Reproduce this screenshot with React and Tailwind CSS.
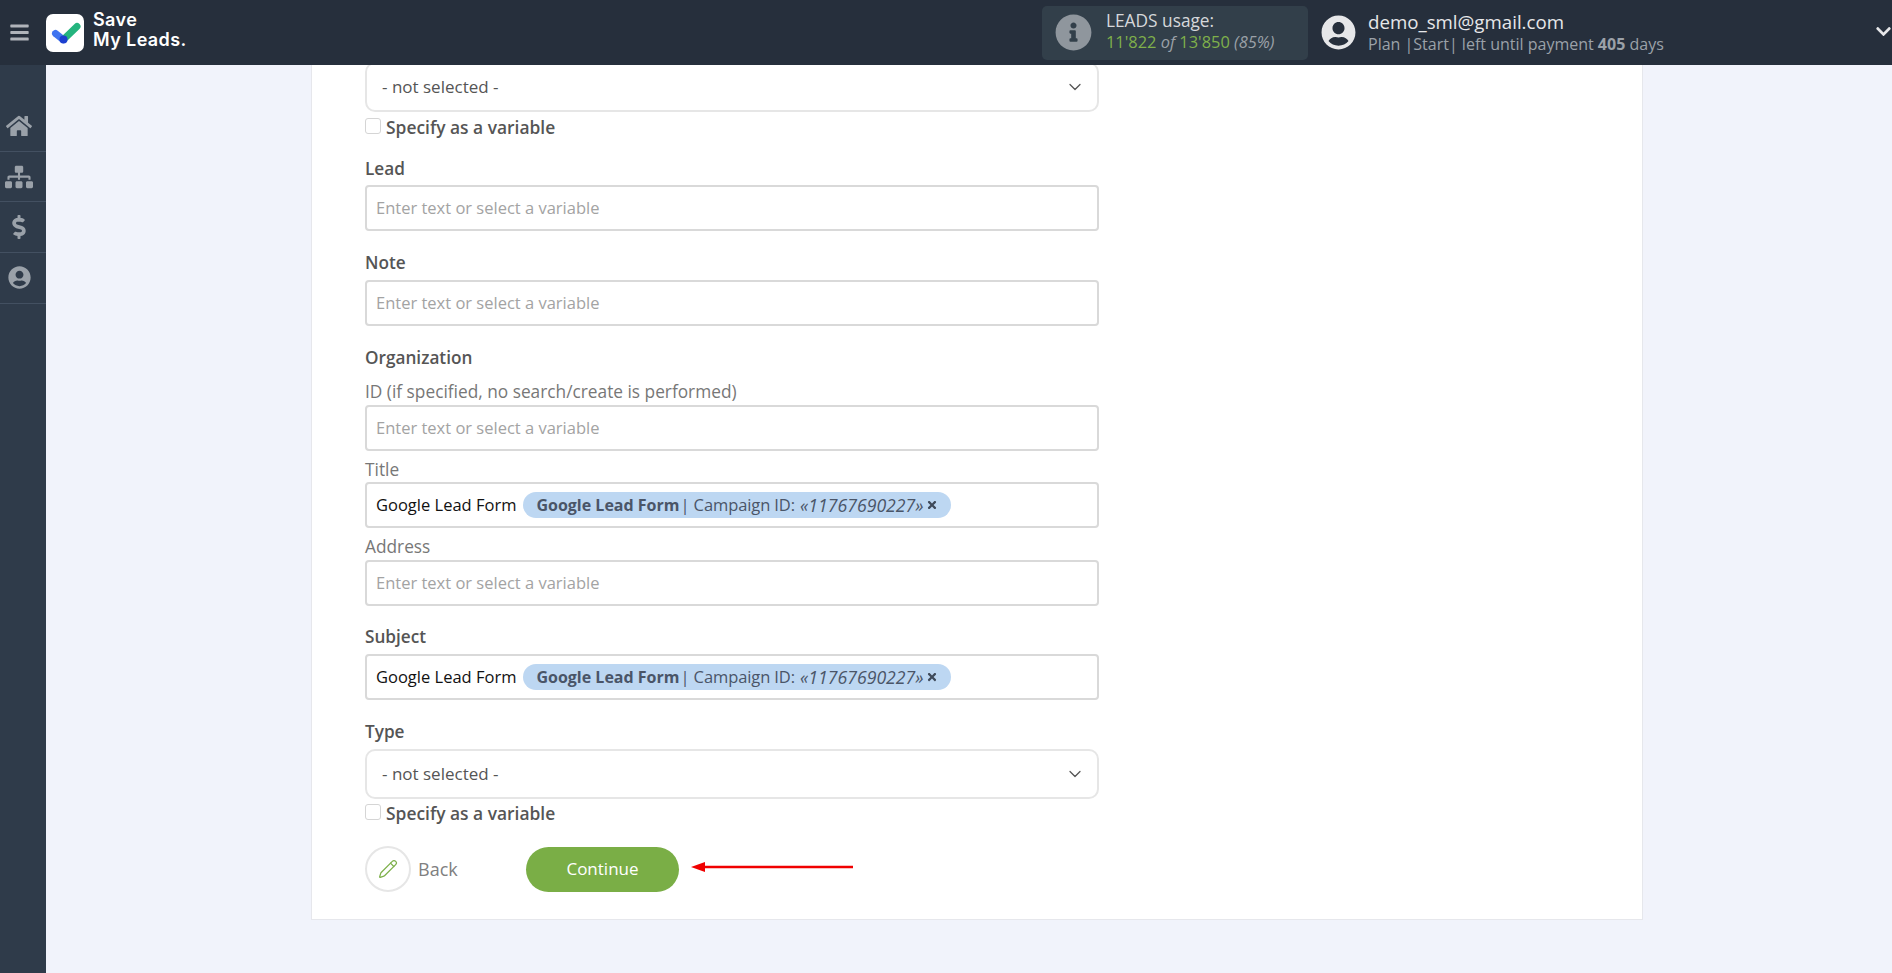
import { ChevronDown, Pencil } from 'lucide-react';
import { FaBars, FaChevronDown, FaDollarSign, FaHome, FaInfoCircle, FaSitemap, FaTimes, FaUserCircle } from 'react-icons/fa';

const openSans = "font-['Open_Sans',sans-serif]";

function SelectBox({ className = '' }) {
  return (
    <div className={`flex h-[50px] w-[734px] items-center justify-between rounded-[10px] border-2 border-[#e6e6e6] bg-white pl-[15px] pr-[12px] text-[17px] text-[#555] ${className}`}>
      <span>- not selected -</span>
      <ChevronDown size={20} strokeWidth={1.5} className="text-[#555]" />
    </div>
  );
}

function SpecifyVariable({ className = '' }) {
  return (
    <div className={`flex h-6 items-center gap-[3px] ${className}`}>
      <span className="-mt-[2px] h-[16px] w-[16px] rounded-[3px] border border-[#d5d5d5] bg-white" />
      <span className="ml-[2px] text-[17.4px] font-semibold text-[#555]">Specify as a variable</span>
    </div>
  );
}

function FieldLabel({ className = '', children }) {
  return <div className={`h-6 text-[17.2px] font-semibold leading-6 text-[#555] ${className}`}>{children}</div>;
}

function SubLabel({ className = '', children }) {
  return <div className={`h-6 text-[17.3px] leading-6 text-[#777] ${className}`}>{children}</div>;
}

function TextInput({ className = '', children }) {
  return (
    <div className={`flex h-[46px] w-[734px] items-center whitespace-nowrap rounded-[4px] border-2 border-[#d9d9d9] bg-white px-[9px] text-[16.5px] ${className}`}>
      {children || <span className="text-[#a3a3a3]">Enter text or select a variable</span>}
    </div>
  );
}

function TagInput({ className = '' }) {
  return (
    <TextInput className={className}>
      <span className="text-[#111]">Google Lead Form</span>
      <span className="ml-[7px] flex h-[26px] w-[428px] items-center rounded-full bg-[#bdd7f2] pl-[13px] text-[#4a5568]">
        <span className="text-[16px] font-bold">Google Lead Form</span>
        <span className="ml-[1px] tracking-[-0.1px]">| Campaign ID:</span>
        <span className="ml-[5px] text-[17.7px] italic">«11767690227»</span>
        <FaTimes size={12} className="ml-[2px] text-[#3f4a5a]" />
      </span>
    </TextInput>
  );
}

function RedArrow() {
  return (
    <svg width="162" height="12" viewBox="0 0 162 12" className="ml-[12px] -mt-[5px]">
      <path d="M12 4.8H162V7.2H12z" fill="#f00000" />
      <path d="M0 6L14 1V11z" fill="#f00000" />
    </svg>
  );
}

function Logo() {
  return (
    <div className="h-[38px] w-[38px] rounded-[7px] bg-white">
      <svg width="38" height="38" viewBox="0 0 38 38" fill="none">
        <path d="M9.5 19.5L17 25.5" stroke="#3f74f0" strokeWidth="7" strokeLinecap="round" />
        <path d="M18 25L31 12.5" stroke="#24b47e" strokeWidth="7" strokeLinecap="round" />
        <circle cx="17.5" cy="25.5" r="4" fill="#1c3fd0" />
      </svg>
    </div>
  );
}

function SideItem({ children }) {
  return (
    <div className="flex h-[50.7px] items-center justify-center border-b border-[#435061] pr-[8px] text-[#9aa1a9]">
      {children}
    </div>
  );
}

export default function App() {
  return (
    <div className={`flex h-[973px] flex-col overflow-hidden bg-[#f1f3fb] ${openSans}`}>
      <header className="relative z-10 flex h-[65px] shrink-0 items-center bg-[#262f3c] text-white">
        <div className="flex w-[46px] justify-center pr-[8px] text-[#b0b4ba]">
          <FaBars size={21} />
        </div>
        <Logo />
        <div className="-mt-[6px] ml-[9px] font-['Inter',sans-serif] text-[18px] font-semibold leading-[20px] tracking-[0.4px]">
          <div>Save</div>
          <div>My Leads.</div>
        </div>
        <div className="ml-auto flex h-[54px] w-[266px] items-center rounded-[5px] bg-[#323f4a] pl-[13px]">
          <FaInfoCircle size={37} className="text-[#8f969d]" />
          <div className="-mt-[3px] ml-[14px] text-[16.4px] leading-[21px] text-[#d6d8db]">
            <div className="text-[17.3px]">LEADS usage:</div>
            <div className="text-[#9ba1a8]">
              <span className="text-[#7fb04a]">11'822</span> <i>of</i> <span className="text-[#7fb04a]">13'850</span> <i>(85%)</i>
            </div>
          </div>
        </div>
        <FaUserCircle size={35} className="ml-[13px] text-[#e6e7e9]" />
        <div className="-mt-[2px] ml-[12px] w-[507px]">
          <div className="text-[18.7px] leading-[24px] text-[#e6e7e9]">demo_sml@gmail.com</div>
          <div className="text-[16px] leading-[20px] text-[#9ba1a8]">
            Plan |Start| left until payment <b>405</b> days
          </div>
        </div>
        <FaChevronDown size={17} className="-mt-[2px] text-[#e6e7e9]" />
      </header>

      <div className="flex min-h-0 flex-1">
        <nav className="w-[46px] shrink-0 bg-[#2f3b4a] pt-[36px]">
          <SideItem><FaHome size={26} /></SideItem>
          <SideItem><FaSitemap size={28} /></SideItem>
          <SideItem><FaDollarSign size={24} /></SideItem>
          <SideItem><FaUserCircle size={23} /></SideItem>
        </nav>

        <main className="min-w-0 flex-1 pl-[265px]">
          <section className="h-fit w-[1332px] border border-t-0 border-[#e6e7ec] bg-white pb-[27px] pl-[53px]">
            <SelectBox className="-mt-[3px]" />
            <SpecifyVariable className="mt-[3px]" />
            <FieldLabel className="mt-[18px]">Lead</FieldLabel>
            <TextInput className="mt-[4px]" />
            <FieldLabel className="mt-[20px]">Note</FieldLabel>
            <TextInput className="mt-[5px]" />
            <FieldLabel className="mt-[20px]">Organization</FieldLabel>
            <SubLabel className="mt-[10px]">ID (if specified, no search/create is performed)</SubLabel>
            <TextInput className="mt-[1px]" />
            <SubLabel className="mt-[7px]">Title</SubLabel>
            <TagInput />
            <SubLabel className="mt-[7px]">Address</SubLabel>
            <TextInput className="mt-[1px]" />
            <FieldLabel className="mt-[19px]">Subject</FieldLabel>
            <TagInput className="mt-[5px]" />
            <FieldLabel className="mt-[20px]">Type</FieldLabel>
            <SelectBox className="mt-[5px]" />
            <SpecifyVariable className="mt-[2px]" />
            <div className="mt-[21px] flex h-[46px] items-center">
              <span className="flex h-[46px] w-[46px] items-center justify-center rounded-full border-2 border-[#e6e6e6]">
                <Pencil size={20} strokeWidth={1.5} className="text-[#7db04a]" />
              </span>
              <span className="ml-[7px] w-[108px] text-[18px] text-[#808080]">Back</span>
              <button type="button" className="h-[45px] w-[153px] rounded-full bg-[#7aae46] text-[17px] text-white">
                Continue
              </button>
              <RedArrow />
            </div>
          </section>
        </main>
      </div>
    </div>
  );
}
